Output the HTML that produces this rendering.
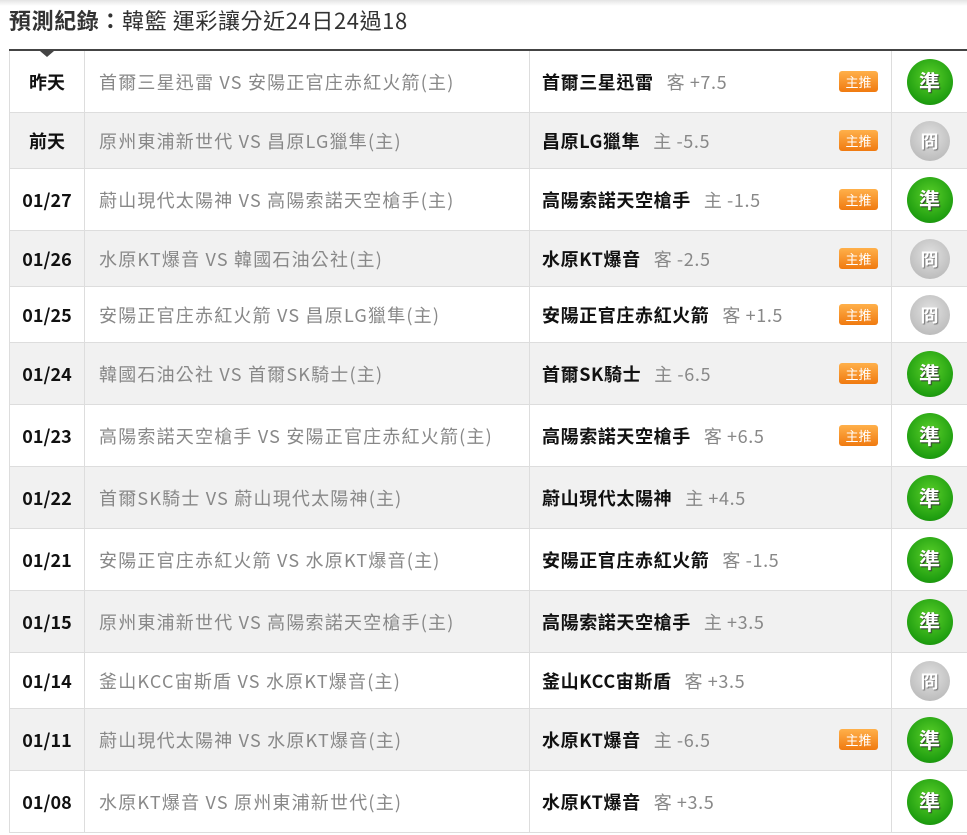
<!DOCTYPE html><html><head><meta charset="utf-8"><style>
body{margin:0;width:967px;height:835px;overflow:hidden;background:#fff;font-family:"Noto Sans CJK TC","Liberation Sans",sans-serif;position:relative}
.sh{position:absolute;top:0;left:0;right:0;height:6px;background:linear-gradient(#e4e4e4,#fff)}
h1{position:absolute;left:9px;top:5px;margin:0;font-size:22px;letter-spacing:0.6px;font-weight:normal;color:#333;line-height:30px;white-space:nowrap}
h1 b{color:#333;font-weight:bold}
table{position:absolute;left:9px;top:49px;width:958px;border-collapse:collapse;border-top:2px solid #444}
td{border:1px solid #ddd;font-size:18px;letter-spacing:0.6px;padding:0;vertical-align:middle;line-height:22px;white-space:nowrap}
tr:nth-child(even) td{background:#f1f1f1}
td.d{width:74px;text-align:center;font-weight:bold;color:#111;letter-spacing:0}
td.m{width:430px;padding-left:14px;color:#888;letter-spacing:1.2px}
td.p{width:349px;padding-left:12px;color:#111;font-weight:bold;position:relative}
td.p span{font-weight:normal;color:#888;margin-left:13px}
td.r{text-align:center;border-right:none}
tr.g td{height:61px}tr.x td{height:55px}
.bd{position:absolute;left:309px;top:50%;margin-top:-11px;width:39px;height:21px;border-radius:3px;background:linear-gradient(#ffb04a,#f07a10);color:#fff;font-size:13px;letter-spacing:0;line-height:21px;text-align:center;font-weight:normal}
.c{display:inline-block;border-radius:50%;color:#fff;font-weight:bold;font-style:normal;text-align:center;vertical-align:middle;letter-spacing:0}
.cg{width:46px;height:46px;line-height:46px;font-size:21px;background:radial-gradient(circle at 50% 40%,#5bd02a,#1f9e10 70%,#107a08);text-shadow:1px 1px 1px #333}
.cx{width:40px;height:40px;line-height:40px;font-size:18px;background:radial-gradient(circle at 50% 40%,#e2e2e2,#bdbdbd 75%,#a8a8a8);text-shadow:1px 1px 1px #777}
.tri{position:absolute;left:40px;top:51px;width:0;height:0;border-left:7px solid transparent;border-right:7px solid transparent;border-top:6px solid #444}
</style></head><body><div class="sh"></div>
<h1><b>預測紀錄：</b>韓籃 運彩讓分近24日24過18</h1>
<table>
<tr class="g"><td class="d">昨天</td><td class="m">首爾三星迅雷 VS 安陽正官庄赤紅火箭(主)</td><td class="p">首爾三星迅雷<span>客 +7.5</span><div class="bd">主推</div></td><td class="r"><i class="c cg">準</i></td></tr>
<tr class="x"><td class="d">前天</td><td class="m">原州東浦新世代 VS 昌原LG獵隼(主)</td><td class="p">昌原LG獵隼<span>主 -5.5</span><div class="bd">主推</div></td><td class="r"><i class="c cx">冏</i></td></tr>
<tr class="g"><td class="d">01/27</td><td class="m">蔚山現代太陽神 VS 高陽索諾天空槍手(主)</td><td class="p">高陽索諾天空槍手<span>主 -1.5</span><div class="bd">主推</div></td><td class="r"><i class="c cg">準</i></td></tr>
<tr class="x"><td class="d">01/26</td><td class="m">水原KT爆音 VS 韓國石油公社(主)</td><td class="p">水原KT爆音<span>客 -2.5</span><div class="bd">主推</div></td><td class="r"><i class="c cx">冏</i></td></tr>
<tr class="x"><td class="d">01/25</td><td class="m">安陽正官庄赤紅火箭 VS 昌原LG獵隼(主)</td><td class="p">安陽正官庄赤紅火箭<span>客 +1.5</span><div class="bd">主推</div></td><td class="r"><i class="c cx">冏</i></td></tr>
<tr class="g"><td class="d">01/24</td><td class="m">韓國石油公社 VS 首爾SK騎士(主)</td><td class="p">首爾SK騎士<span>主 -6.5</span><div class="bd">主推</div></td><td class="r"><i class="c cg">準</i></td></tr>
<tr class="g"><td class="d">01/23</td><td class="m">高陽索諾天空槍手 VS 安陽正官庄赤紅火箭(主)</td><td class="p">高陽索諾天空槍手<span>客 +6.5</span><div class="bd">主推</div></td><td class="r"><i class="c cg">準</i></td></tr>
<tr class="g"><td class="d">01/22</td><td class="m">首爾SK騎士 VS 蔚山現代太陽神(主)</td><td class="p">蔚山現代太陽神<span>主 +4.5</span></td><td class="r"><i class="c cg">準</i></td></tr>
<tr class="g"><td class="d">01/21</td><td class="m">安陽正官庄赤紅火箭 VS 水原KT爆音(主)</td><td class="p">安陽正官庄赤紅火箭<span>客 -1.5</span></td><td class="r"><i class="c cg">準</i></td></tr>
<tr class="g"><td class="d">01/15</td><td class="m">原州東浦新世代 VS 高陽索諾天空槍手(主)</td><td class="p">高陽索諾天空槍手<span>主 +3.5</span></td><td class="r"><i class="c cg">準</i></td></tr>
<tr class="x"><td class="d">01/14</td><td class="m">釜山KCC宙斯盾 VS 水原KT爆音(主)</td><td class="p">釜山KCC宙斯盾<span>客 +3.5</span></td><td class="r"><i class="c cx">冏</i></td></tr>
<tr class="g"><td class="d">01/11</td><td class="m">蔚山現代太陽神 VS 水原KT爆音(主)</td><td class="p">水原KT爆音<span>主 -6.5</span><div class="bd">主推</div></td><td class="r"><i class="c cg">準</i></td></tr>
<tr class="g"><td class="d">01/08</td><td class="m">水原KT爆音 VS 原州東浦新世代(主)</td><td class="p">水原KT爆音<span>客 +3.5</span></td><td class="r"><i class="c cg">準</i></td></tr>
</table><div class="tri"></div>
</body></html>
